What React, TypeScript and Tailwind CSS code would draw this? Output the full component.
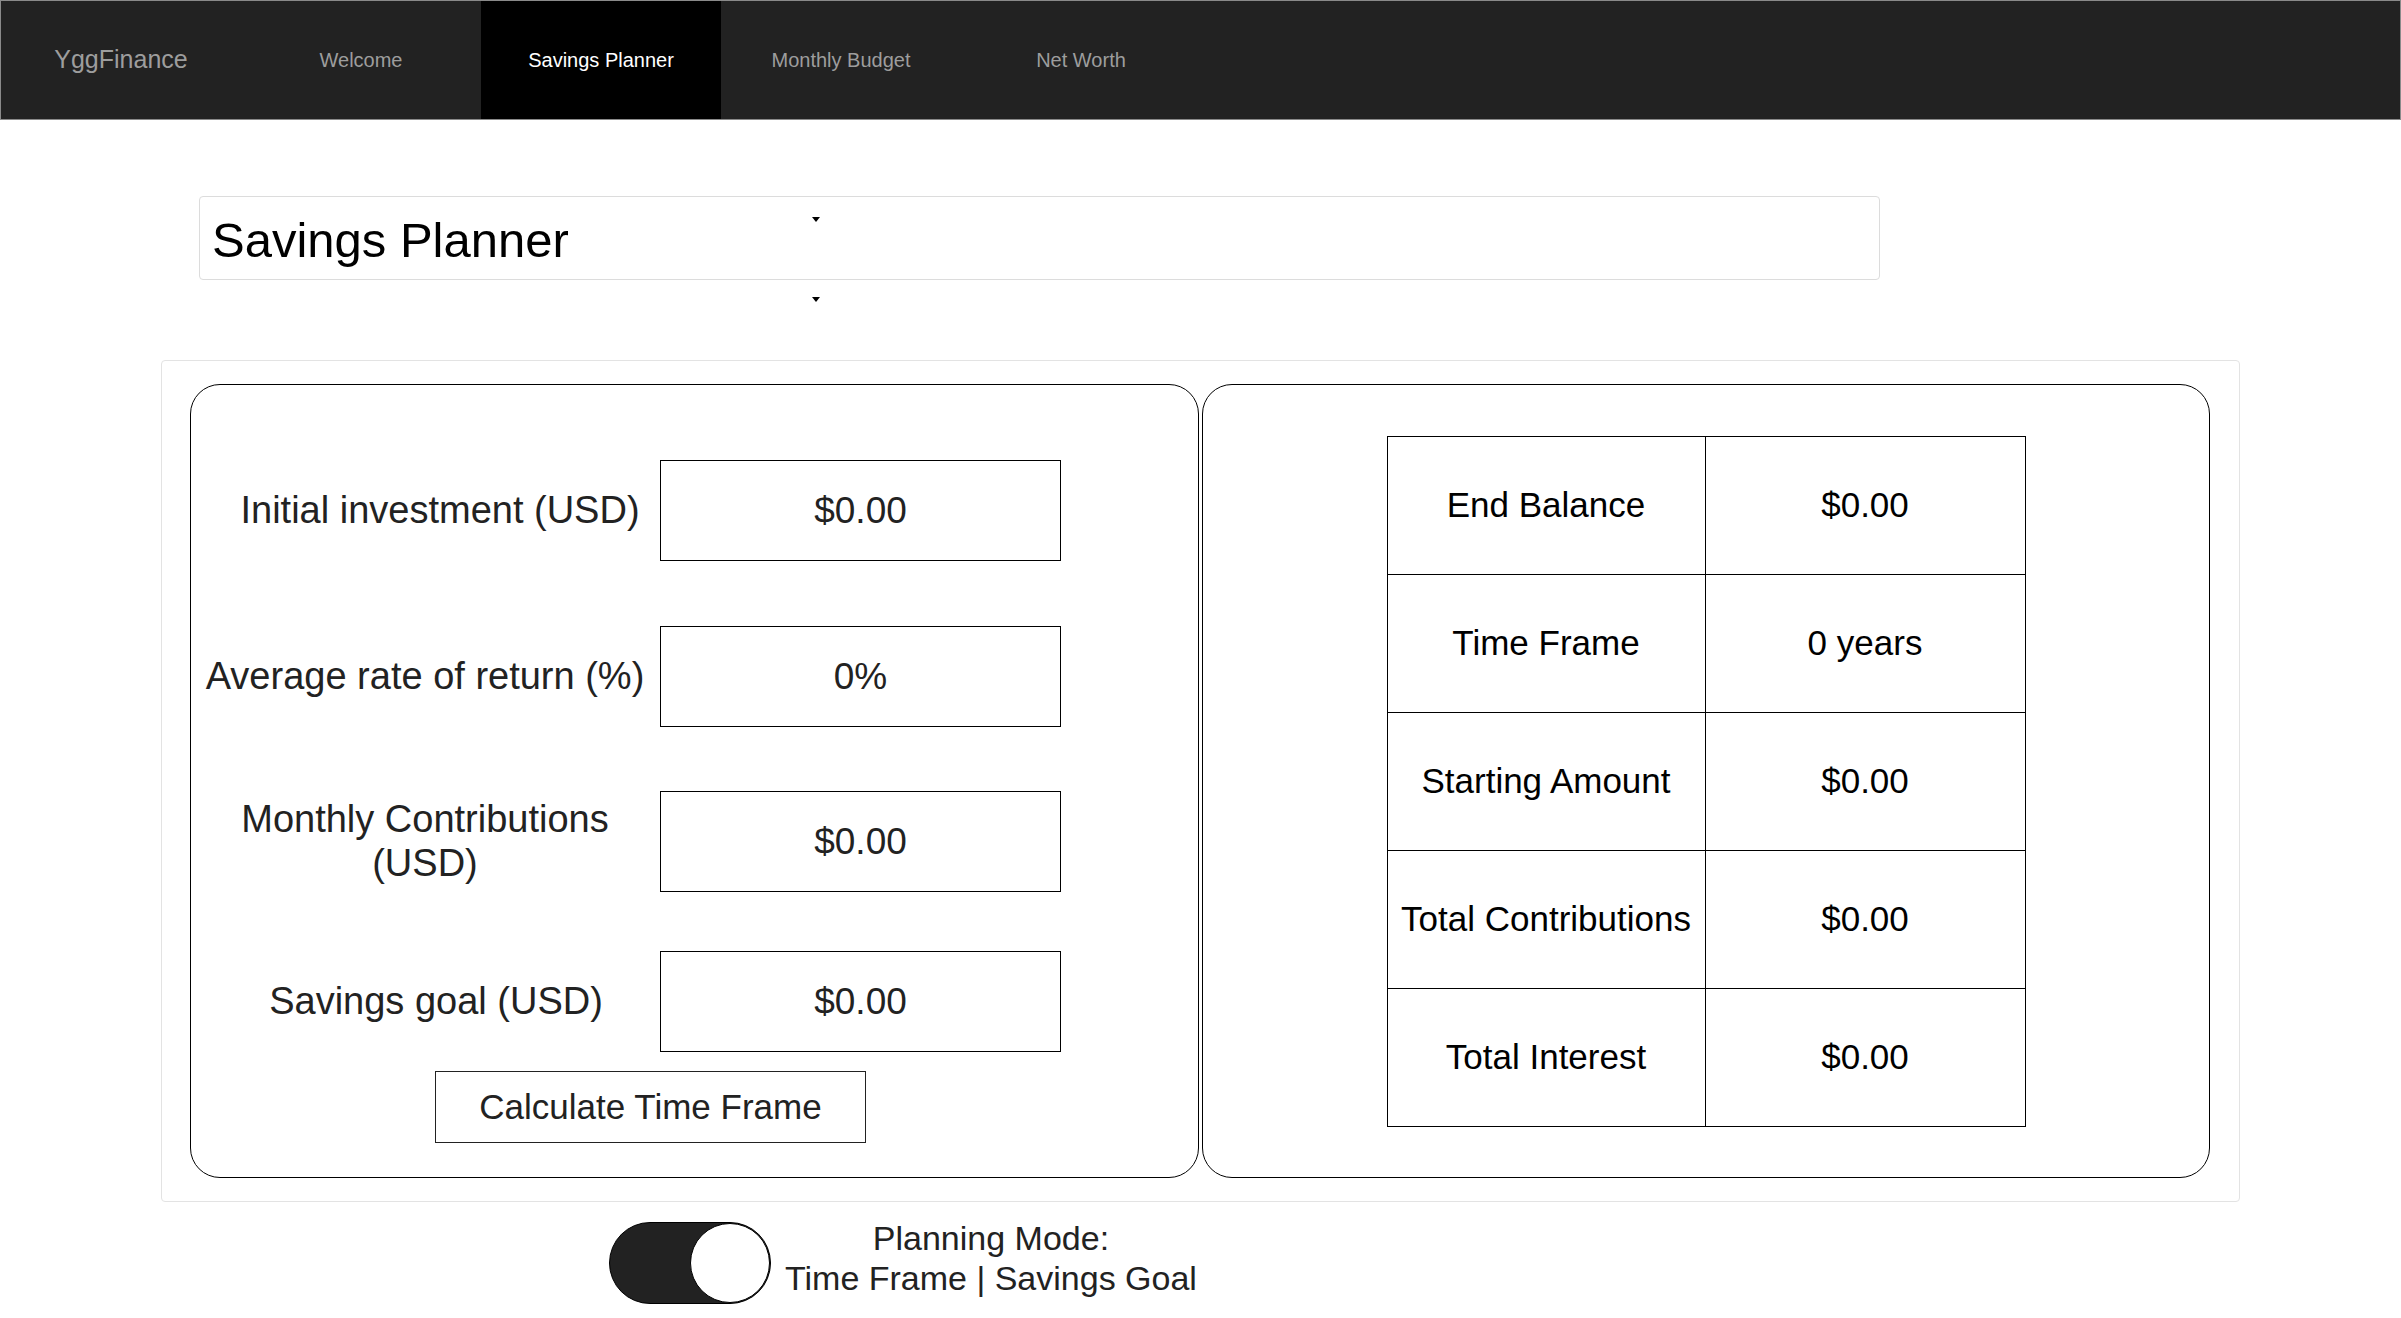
import { useState } from 'react'

const navItems = ['Welcome', 'Savings Planner', 'Monthly Budget', 'Net Worth']

const inputs = [
  { label: 'Initial investment (USD)', value: '$0.00', gap: 'mt-0', pad: 'pl-[30px]' },
  { label: 'Average rate of return (%)', value: '0%', gap: 'mt-[65px]', pad: 'pl-0' },
  { label: 'Monthly Contributions (USD)', value: '$0.00', gap: 'mt-[64px]', pad: 'pl-0' },
  { label: 'Savings goal (USD)', value: '$0.00', gap: 'mt-[59px]', pad: 'pl-[22px]' },
]

const results = [
  ['End Balance', '$0.00'],
  ['Time Frame', '0 years'],
  ['Starting Amount', '$0.00'],
  ['Total Contributions', '$0.00'],
  ['Total Interest', '$0.00'],
]

const Arrow = ({ top }: { top: string }) => (
  <span
    className={`absolute left-[613px] ${top} w-0 h-0 border-l-[4px] border-r-[4px] border-t-[5px] border-l-transparent border-r-transparent border-t-black`}
  />
)

const App = () => {
  const [active] = useState('Savings Planner')
  const [goalMode, setGoalMode] = useState(true)

  return (
    <div className="min-h-screen bg-white text-[#222] font-['Liberation_Sans',Arial,sans-serif]">
      <nav className="h-[120px] bg-[#222] border border-[#8a8a8a] flex">
        <div className="w-[240px] flex items-center justify-center text-[25px] text-[#9d9d9d]">
          YggFinance
        </div>
        {navItems.map((item) => (
          <div
            key={item}
            className={
              item === active
                ? 'w-[240px] flex items-center justify-center text-[20px] bg-black text-white'
                : 'w-[240px] flex items-center justify-center text-[20px] text-[#9d9d9d]'
            }
          >
            {item}
          </div>
        ))}
      </nav>

      <div className="relative ml-[199px] mt-[76px] w-[1681px]">
        <div className="h-[84px] border border-[#dcdcdc] rounded-[4px] flex items-center pl-[12px] pt-[5px] text-[49px] text-black">
          Savings Planner
        </div>
        <Arrow top="top-[21px]" />
        <Arrow top="top-[101px]" />
      </div>

      <div className="ml-[161px] mt-[80px] w-[2079px] h-[842px] border border-[#e3e3e3] rounded-[4px] pt-[23px] pl-[28px]">
        <div className="flex gap-[3px]">
          <div className="w-[1009px] h-[794px] border border-black rounded-[30px] pt-[75px]">
            {inputs.map((row) => (
              <div key={row.label} className={`flex items-center ${row.gap}`}>
                <div className={`ml-[9px] w-[450px] text-center text-[38px] leading-[1.15] ${row.pad}`}>
                  {row.label}
                </div>
                <div className="ml-[10px] w-[401px] h-[101px] border border-black flex items-center justify-center text-[37px]">
                  {row.value}
                </div>
              </div>
            ))}
            <button className="ml-[244px] mt-[19px] w-[431px] h-[72px] border border-[#222] bg-white text-[35px] text-[#222]">
              Calculate Time Frame
            </button>
          </div>

          <div className="w-[1008px] h-[794px] border border-black rounded-[30px] flex items-center justify-center">
            <table className="border-collapse border border-black text-black text-[35px]">
              <tbody>
                {results.map(([name, value]) => (
                  <tr key={name} className="h-[138px]">
                    <td className="w-[318px] border border-black text-center">{name}</td>
                    <td className="w-[320px] border border-black text-center">{value}</td>
                  </tr>
                ))}
              </tbody>
            </table>
          </div>
        </div>
      </div>

      <div className="ml-[609px] mt-[16px] flex items-center">
        <button
          onClick={() => setGoalMode(!goalMode)}
          className={`w-[162px] h-[82px] rounded-full bg-[#222] border border-black flex ${goalMode ? 'justify-end' : 'justify-start'}`}
        >
          <span className="w-[80px] h-[80px] rounded-full bg-white border border-black" />
        </button>
        <div className="ml-[14px] mb-[10px] text-center text-[34px] leading-[40px] text-[#222]">
          <div>Planning Mode:</div>
          <div>Time Frame | Savings Goal</div>
        </div>
      </div>
    </div>
  )
}

export default App
